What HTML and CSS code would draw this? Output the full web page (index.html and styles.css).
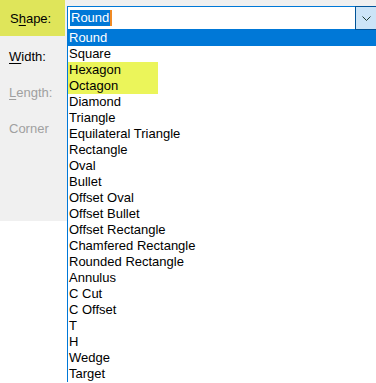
FILE: index.html
```html
<!DOCTYPE html>
<html lang="en">
<head>
  <meta charset="UTF-8" />
  <title>Pad Shape</title>
  <link rel="stylesheet" href="styles.css">
</head>
<body>
  <div class="dialog">
    <div class="labels">
      <div class="label label-hl">S<u>h</u>ape:</div>
      <div class="label first"><u>W</u>idth:</div>
      <div class="label disabled"><u>L</u>ength:</div>
      <div class="label disabled">Corner</div>
    </div>

    <div class="combo">
      <div class="combo-field">
        <span class="combo-text">Round</span><span class="caret"></span>
        <div class="combo-btn">
          <svg width="9" height="5" viewBox="0 0 9 5">
            <polyline points="0.5,0.5 4.5,4.5 8.5,0.5" fill="none" stroke="#1f3b2f" stroke-width="1" />
          </svg>
        </div>
      </div>
      <ul class="combo-list">
        <li class="selected">Round</li>
        <li>Square</li>
        <li class="hl">Hexagon</li>
        <li class="hl">Octagon</li>
        <li>Diamond</li>
        <li>Triangle</li>
        <li>Equilateral Triangle</li>
        <li>Rectangle</li>
        <li>Oval</li>
        <li>Bullet</li>
        <li>Offset Oval</li>
        <li>Offset Bullet</li>
        <li>Offset Rectangle</li>
        <li>Chamfered Rectangle</li>
        <li>Rounded Rectangle</li>
        <li>Annulus</li>
        <li>C Cut</li>
        <li>C Offset</li>
        <li>T</li>
        <li>H</li>
        <li>Wedge</li>
        <li>Target</li>
      </ul>
    </div>
  </div>
</body>
</html>
```

FILE: styles.css
```css
body {
  margin: 0;
  font-family: 'Liberation Sans', Arial, sans-serif;
  font-size: 13px;
  background: #fff;
  color: #000;
  overflow: hidden;
}
.dialog {
  display: flex;
  align-items: flex-start;
}
.labels {
  width: 67px;
  height: 221px;
  flex-shrink: 0;
  background: #f0f0f0;
}
.label {
  height: 36px;
  display: flex;
  align-items: center;
  padding-left: 9px;
}
.label-hl {
  width: 65px;
  box-sizing: border-box;
  padding-left: 10px;
  background: #dfe55a;
}
.label.first {
  margin-top: 2px;
}
.label.disabled {
  color: #a0a0a0;
}
.label u {
  text-underline-offset: 2px;
}

.combo {
  flex: 1;
  padding-top: 6px;
  background: linear-gradient(#f0f0f0 6px, #fff 6px);
}
.combo-field {
  height: 24px;
  box-sizing: border-box;
  display: flex;
  align-items: center;
  border: 1px solid #0078d7;
  border-right: none;
  background: #fff;
  padding-left: 2px;
}
.combo-text {
  background: #0078d7;
  color: #fff;
  line-height: 16px;
  padding: 0 1px;
}
.caret {
  width: 2px;
  height: 16px;
  background: #f08a24;
}
.combo-btn {
  margin-left: auto;
  align-self: stretch;
  margin-top: -1px;
  margin-bottom: -1px;
  width: 20px;
  border: 1px solid #005499;
  border-right: none;
  background: #cce4f7;
  display: flex;
  align-items: center;
  justify-content: center;
}
.combo-list {
  list-style: none;
  margin: 0;
  padding: 0;
  border-left: 1px solid #0078d7;
}
.combo-list li {
  height: 16px;
  line-height: 16px;
  padding-left: 1px;
  white-space: nowrap;
}
.combo-list li.selected {
  background: #0078d7;
  color: #fff;
}
.combo-list li.hl {
  background: linear-gradient(to right, #ebf55a 90px, transparent 90px);
}
```
